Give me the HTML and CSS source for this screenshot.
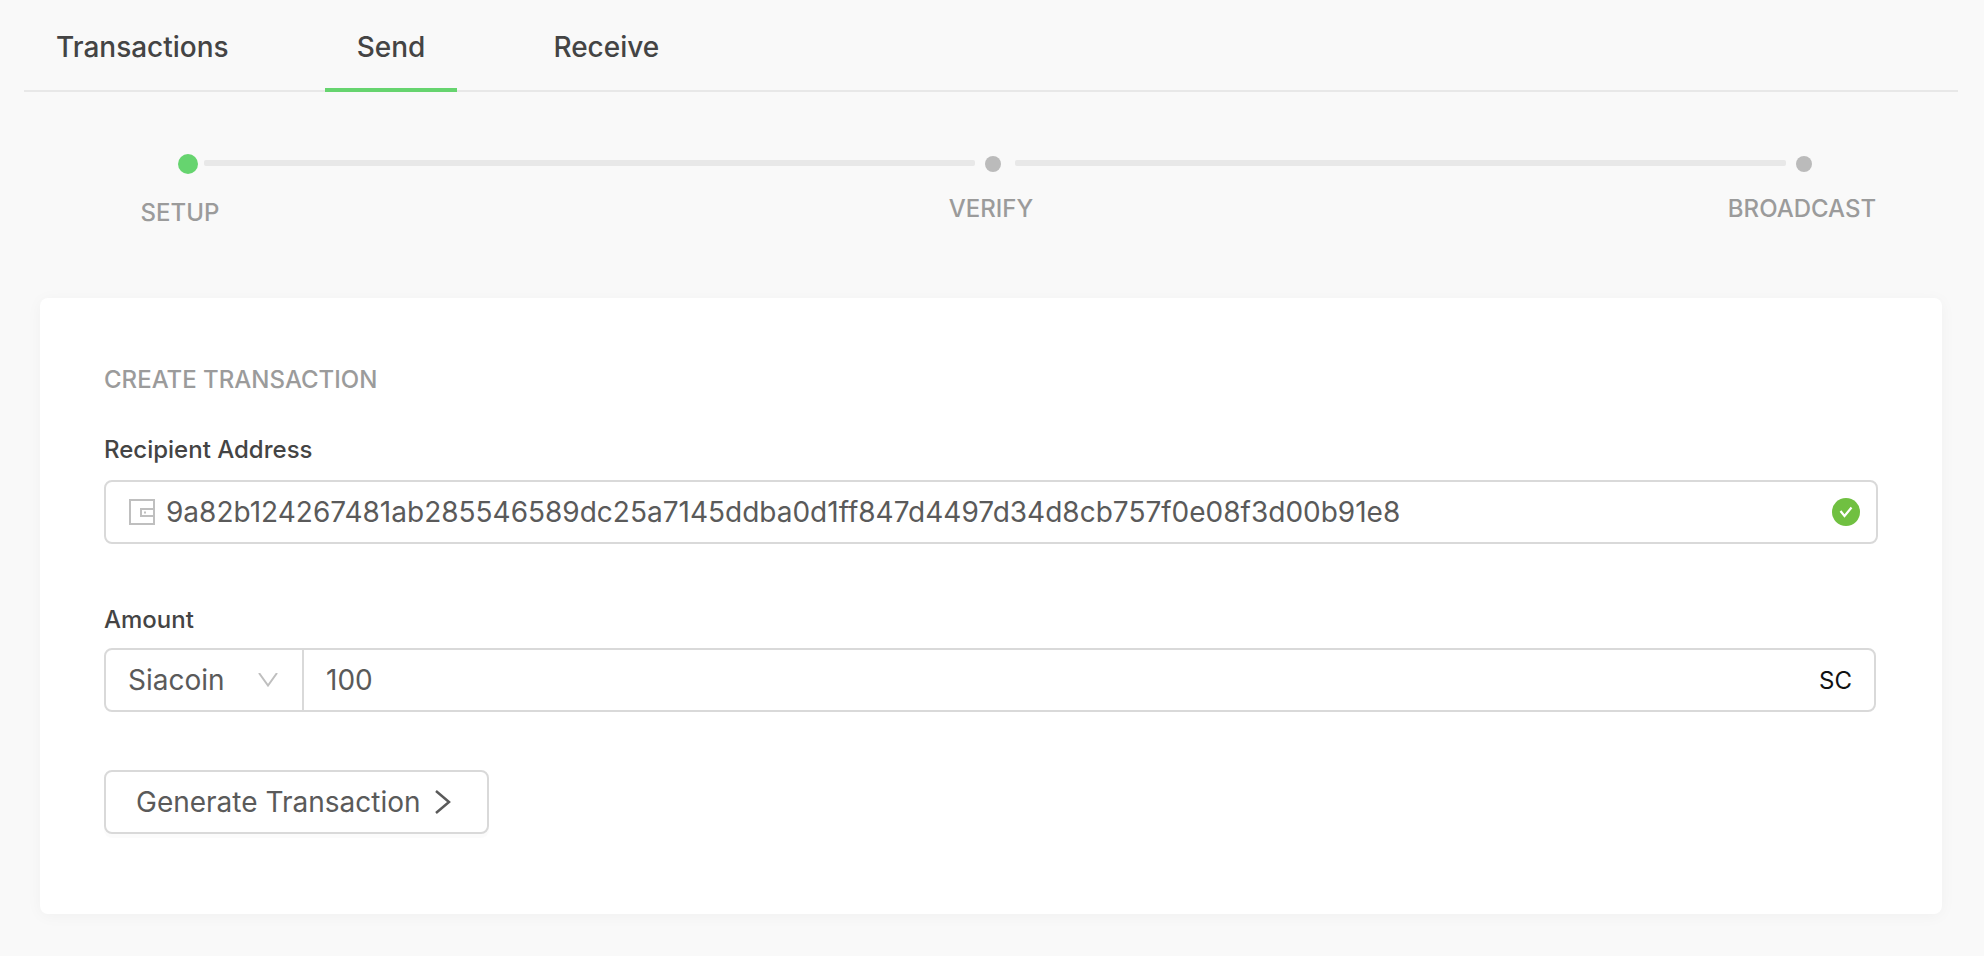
FILE: index.html
```html
<!DOCTYPE html>
<html lang="en">

<head>
   <meta charset="UTF-8">
   <meta name="viewport" content="width=device-width, initial-scale=1.0">
   <title>Send</title>
   <link rel="stylesheet" href="styles.css">
</head>

<body>
   <nav class="tabs">
      <a href="#transactions" class="tab">Transactions</a>
      <a href="#send" class="tab active">Send</a>
      <a href="#receive" class="tab">Receive</a>
   </nav>

   <ol class="steps">
      <li class="step active">
         <div class="rail"><span class="dot"></span><span class="line"></span></div>
         <div class="step-title">SETUP</div>
      </li>
      <li class="step">
         <div class="rail"><span class="dot"></span><span class="line"></span></div>
         <div class="step-title">VERIFY</div>
      </li>
      <li class="step">
         <div class="rail"><span class="dot"></span></div>
         <div class="step-title">BROADCAST</div>
      </li>
   </ol>

   <form class="card">
      <h1>CREATE TRANSACTION</h1>

      <label class="label" for="address">Recipient Address</label>
      <div class="field address">
         <svg class="wallet" viewBox="0 0 26 26" fill="none" stroke="#bfbfbf" stroke-width="2">
            <path d="M1 1h24v24H1zM25 10H12v7h13" />
            <path d="M16 12.500v2" />
         </svg>
         <input type="text" id="address" value="9a82b124267481ab285546589dc25a7145ddba0d1ff847d4497d34d8cb757f0e08f3d00b91e8">
         <svg class="check" viewBox="0 0 28 28" fill="none">
            <circle cx="14" cy="14" r="14" fill="#70c041" />
            <path d="M8.500 13l4 5 7-8.500" stroke="#fff" stroke-width="2.200" />
         </svg>
      </div>

      <label class="label" for="amount">Amount</label>
      <div class="field amount">
         <div class="currency">
            <select name="currency" aria-label="Currency">
               <option>Siacoin</option>
            </select>
            <svg class="arrow" viewBox="0 0 20 14" fill="none" stroke="#bfbfbf" stroke-width="2">
               <path d="M1 0l9 12.500L19 0" />
            </svg>
         </div>
         <input type="text" id="amount" value="100">
         <span class="unit">SC</span>
      </div>

      <button type="button" class="generate">
         Generate Transaction
         <svg class="next" viewBox="0 0 16 24" fill="none" stroke="#5a5a5a" stroke-width="2.500">
            <path d="M1 1l13 11L1 23" />
         </svg>
      </button>
   </form>
</body>

</html>
```
FILE: styles.css
```css
* {
   box-sizing: border-box;
}

body {
   font-family: Inter, 'Open Sans', sans-serif;
   margin: 0;
   font-size: 28px;
   color: #5a5a5a;
   background-color: #f9f9f9;
}

.tabs {
   display: flex;
   gap: 64px;
   margin: 0 26px 0 24px;
   height: 92px;
   border-bottom: 2px solid #e8e8e8;
}

.tab {
   height: 92px;
   padding: 27px 32px 0;
   line-height: 40px;
   font-weight: 500;
   color: #444;
   text-decoration: none;
   border-bottom: 4px solid transparent;
}

.tab.active {
   border-color: #66d46f;
}

.steps {
   display: flex;
   list-style: none;
   margin: 60px 42px 0 40px;
   padding: 0;
   height: 146px;
}

.step {
   flex: 1;
}

.step:last-child {
   flex: 0 0 280px;
}

.rail {
   display: flex;
   align-items: center;
   height: 24px;
   padding-left: 134px;
}

.dot {
   width: 16px;
   height: 16px;
   border-radius: 50%;
   background-color: #bbb;
}

/* the line runs on to the dot of the next step */
.line {
   flex: 1;
   height: 6px;
   margin: 0 -124px 2px 14px;
   border-radius: 2px;
   background-color: #e8e8e8;
}

.step-title {
   width: 280px;
   margin-top: 17px;
   font-size: 24px;
   line-height: 32px;
   text-align: center;
   color: #9b9b9b;
   font-weight: 500;
}

.step.active .rail {
   padding-left: 138px;
}

.step.active .dot {
   width: 20px;
   height: 20px;
   background-color: #66d46f;
}

.step.active .line {
   margin-left: 6px;
}

.step.active .step-title {
   margin-top: 21px;
}

.card {
   margin: 0 42px 42px 40px;
   padding: 66px 64px 80px;
   border-radius: 8px;
   background-color: #fff;
   box-shadow: 0 2px 16px rgba(0, 0, 0, 0.04);
}

.card h1 {
   margin: 0 0 38px;
   font-size: 24px;
   line-height: 32px;
   font-weight: 500;
   color: #9b9b9b;
}

.label {
   display: block;
   margin-bottom: 14px;
   font-size: 24px;
   line-height: 32px;
   font-weight: 500;
   color: #444;
}

.address + .label {
   margin-bottom: 12px;
}

.field {
   display: flex;
   align-items: center;
   height: 64px;
   border: 2px solid #d9d9d9;
   border-radius: 8px;
}

.field input,
.field select {
   border: 0;
   outline: 0;
   padding: 0;
   background: none;
   font: inherit;
   color: inherit;
}

.field input {
   flex: 1;
   min-width: 0;
}

.address {
   gap: 11px;
   padding: 0 16px 0 23px;
   margin-bottom: 60px;
}

.wallet {
   width: 26px;
   height: 26px;
}

.check {
   width: 28px;
   height: 28px;
}

.amount {
   margin: 0 2px 58px 0;
   padding-right: 22px;
}

.currency {
   display: flex;
   align-items: center;
   width: 198px;
   height: 60px;
   border-right: 2px solid #d9d9d9;
}

.currency select {
   appearance: none;
   width: 100%;
   height: 60px;
   padding-left: 22px;
}

.arrow {
   flex: none;
   width: 20px;
   height: 14px;
   margin: 0 24px 0 -44px;
   pointer-events: none;
}

.amount input {
   padding-left: 22px;
}

.unit {
   font-size: 24px;
   color: #111;
}

.generate {
   display: flex;
   align-items: center;
   gap: 14px;
   height: 64px;
   padding: 0 36px 0 30px;
   border: 2px solid #d9d9d9;
   border-radius: 8px;
   background-color: #fff;
   font: inherit;
   color: inherit;
   box-shadow: 0 4px 0 rgba(0, 0, 0, 0.015);
}

.next {
   width: 16px;
   height: 24px;
}
```
